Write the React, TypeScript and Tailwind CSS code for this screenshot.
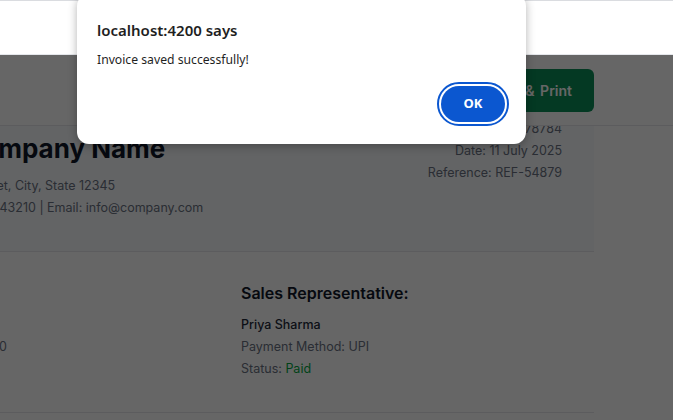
export default function App() {
  return (
    <div className="relative w-[673px] h-[420px] overflow-hidden bg-white font-['Inter','Liberation_Sans',sans-serif]">
      {/* top band (not dimmed) */}
      <div className="relative z-40 h-[55px] bg-white border-t border-[#dadce0] border-b border-b-[#e5e7eb]" />

      {/* page */}
      <div className="relative h-[365px] overflow-hidden bg-white">
        {/* sticky toolbar */}
        <div className="relative z-10 h-[71px] bg-white border-b border-gray-200 flex items-center justify-end gap-3 pr-[79px]">
          <button className="h-[43px] pl-[22px] pr-[22px] rounded-md bg-[#0b8f58] text-white text-[14px] font-semibold [word-spacing:2px]">
            Save &amp; Print
          </button>
        </div>

        {/* main */}
        <div className="flex">
          <div className="w-[594px] shrink-0 border-r border-gray-200">
            <div className="ml-[-144px] w-[738px] mt-[-81px] bg-white">
              {/* header section */}
              <div className="h-[207px] bg-slate-50 border-b border-gray-200 px-8 pt-8 flex justify-between">
                <div className="mt-[52px] ml-[1px]">
                  <div className="flex items-center gap-4 h-10 ml-[-6px]">
                    <div className="w-16 h-10 rounded-md bg-emerald-600" />
                    <h1 className="text-[26px] leading-[32px] font-bold text-gray-900">Company Name</h1>
                  </div>
                  <p className="mt-[6px] ml-[3px] text-[12.5px] leading-[22px] text-gray-500">123 Business Street, City, State 12345</p>
                  <p className="text-[12.5px] leading-[22px] text-gray-500">
                    Phone: +91 98765 43210 <span className="text-gray-500">|</span> Email: info@company.com
                  </p>
                </div>
                <div className="text-right">
                  <div className="text-[28px] leading-[36px] font-bold text-emerald-600 mb-[5px]">INVOICE</div>
                  <p className="text-[12.5px] leading-[22px] text-gray-500">Invoice #: INV-2025-78784</p>
                  <p className="text-[12.5px] leading-[22px] text-gray-500">Date: 11 July 2025</p>
                  <p className="text-[12.5px] leading-[22px] text-gray-500">Reference: REF-54879</p>
                </div>
              </div>

              {/* parties section */}
              <div className="grid grid-cols-2 gap-8 px-8 pt-[29px] pb-8 border-b border-gray-200">
                <div>
                  <h3 className="text-[16px] leading-[24px] font-semibold text-gray-900 mb-[9px]">Bill To:</h3>
                  <p className="text-[12.5px] leading-[22px] font-medium text-gray-800">Rahul Verma</p>
                  <p className="text-[12.5px] leading-[22px] text-gray-500">Phone: 9876543210</p>
                  <p className="text-[12.5px] leading-[22px] text-gray-500">rahul@mail.com</p>
                </div>
                <div>
                  <h3 className="text-[16px] leading-[24px] font-semibold text-gray-900 mb-[9px]">Sales Representative:</h3>
                  <p className="text-[12.5px] leading-[22px] font-medium text-gray-800">Priya Sharma</p>
                  <p className="text-[12.5px] leading-[22px] text-gray-500">Payment Method: UPI</p>
                  <p className="text-[12.5px] leading-[22px] text-gray-500">
                    Status: <span className="text-green-600">Paid</span>
                  </p>
                </div>
              </div>
              <div className="h-[60px] px-8 pt-6" />
            </div>
          </div>
          <div className="flex-1 bg-white" />
        </div>
      </div>

      {/* dim overlay */}
      <div className="absolute left-0 right-0 top-[55px] bottom-0 z-30 bg-black/60" />

      {/* alert dialog */}
      <div className="absolute z-50 left-[77px] top-[-6px] w-[449px] h-[150px] bg-white rounded-[12px] shadow-[0_2px_10px_rgba(0,0,0,0.3)] pl-5 pr-[21px] pt-[26px] font-['Noto_Sans','Open_Sans',sans-serif] text-[#1f1f1f]">
        <div className="text-[15px] leading-[20px] font-semibold">localhost:4200 says</div>
        <div className="mt-[11px] text-[12.2px] leading-[18px]">Invoice saved successfully!</div>
        <div className="mt-[17px] flex justify-end">
          <button className="w-16 h-9 rounded-full bg-[#0b57d0] text-white text-[13px] font-bold outline-2 outline-offset-2 outline-[#0b57d0] outline-solid">
            OK
          </button>
        </div>
      </div>
    </div>
  );
}
